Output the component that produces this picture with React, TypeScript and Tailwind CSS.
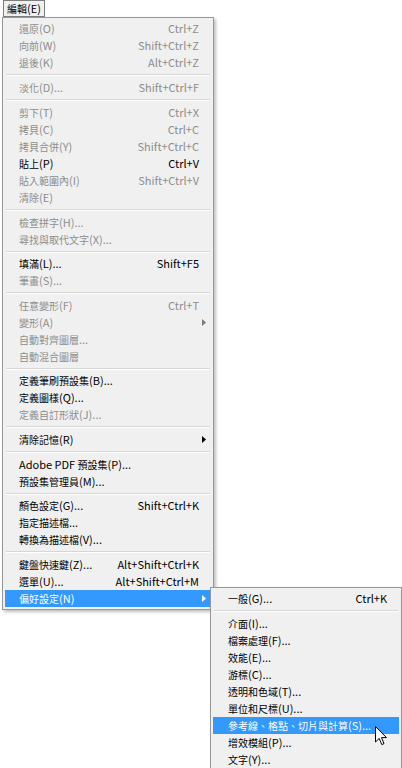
type Entry =
  | { kind: "item"; label: string; shortcut?: string; disabled?: boolean; arrow?: boolean; active?: boolean }
  | { kind: "sep"; h: number };

const font = "font-['Noto_Sans_CJK_TC','Noto_Sans',sans-serif]";

const mainMenu: Entry[] = [
  { kind: "item", label: "還原(O)", shortcut: "Ctrl+Z", disabled: true },
  { kind: "item", label: "向前(W)", shortcut: "Shift+Ctrl+Z", disabled: true },
  { kind: "item", label: "退後(K)", shortcut: "Alt+Ctrl+Z", disabled: true },
  { kind: "sep", h: 8 },
  { kind: "item", label: "淡化(D)...", shortcut: "Shift+Ctrl+F", disabled: true },
  { kind: "sep", h: 8 },
  { kind: "item", label: "剪下(T)", shortcut: "Ctrl+X", disabled: true },
  { kind: "item", label: "拷貝(C)", shortcut: "Ctrl+C", disabled: true },
  { kind: "item", label: "拷貝合併(Y)", shortcut: "Shift+Ctrl+C", disabled: true },
  { kind: "item", label: "貼上(P)", shortcut: "Ctrl+V" },
  { kind: "item", label: "貼入範圍內(I)", shortcut: "Shift+Ctrl+V", disabled: true },
  { kind: "item", label: "清除(E)", disabled: true },
  { kind: "sep", h: 8 },
  { kind: "item", label: "檢查拼字(H)...", disabled: true },
  { kind: "item", label: "尋找與取代文字(X)...", disabled: true },
  { kind: "sep", h: 7 },
  { kind: "item", label: "填滿(L)...", shortcut: "Shift+F5" },
  { kind: "item", label: "筆畫(S)...", disabled: true },
  { kind: "sep", h: 8 },
  { kind: "item", label: "任意變形(F)", shortcut: "Ctrl+T", disabled: true },
  { kind: "item", label: "變形(A)", disabled: true, arrow: true },
  { kind: "item", label: "自動對齊圖層...", disabled: true },
  { kind: "item", label: "自動混合圖層", disabled: true },
  { kind: "sep", h: 7 },
  { kind: "item", label: "定義筆刷預設集(B)..." },
  { kind: "item", label: "定義圖樣(Q)..." },
  { kind: "item", label: "定義自訂形狀(J)...", disabled: true },
  { kind: "sep", h: 8 },
  { kind: "item", label: "清除記憶(R)", arrow: true },
  { kind: "sep", h: 8 },
  { kind: "item", label: "Adobe PDF 預設集(P)..." },
  { kind: "item", label: "預設集管理員(M)..." },
  { kind: "sep", h: 7 },
  { kind: "item", label: "顏色設定(G)...", shortcut: "Shift+Ctrl+K" },
  { kind: "item", label: "指定描述檔..." },
  { kind: "item", label: "轉換為描述檔(V)..." },
  { kind: "sep", h: 8 },
  { kind: "item", label: "鍵盤快速鍵(Z)...", shortcut: "Alt+Shift+Ctrl+K" },
  { kind: "item", label: "選單(U)...", shortcut: "Alt+Shift+Ctrl+M" },
  { kind: "item", label: "偏好設定(N)", arrow: true, active: true },
];

const prefMenu: Entry[] = [
  { kind: "item", label: "一般(G)...", shortcut: "Ctrl+K" },
  { kind: "sep", h: 8 },
  { kind: "item", label: "介面(I)..." },
  { kind: "item", label: "檔案處理(F)..." },
  { kind: "item", label: "效能(E)..." },
  { kind: "item", label: "游標(C)..." },
  { kind: "item", label: "透明和色域(T)..." },
  { kind: "item", label: "單位和尺標(U)..." },
  { kind: "item", label: "參考線、格點、切片與計算(S)...", active: true },
  { kind: "item", label: "增效模組(P)..." },
  { kind: "item", label: "文字(Y)..." },
];

// CJK glyphs in the original are set a little smaller than the latin text
function Label({ text }: { text: string }) {
  const parts = text.split(/([\u3000-\u9fff\uff00-\uffef]+)/).filter(Boolean);
  return (
    <span className="whitespace-nowrap">
      {parts.map((p, i) =>
        /[\u3000-\u9fff\uff00-\uffef]/.test(p) ? (
          <span key={i} className="text-[10px]">
            {p}
          </span>
        ) : (
          <span key={i}>{p}</span>
        )
      )}
    </span>
  );
}

function Arrow({ color }: { color: string }) {
  return (
    <svg width="4" height="7" viewBox="0 0 4 7" className="shrink-0">
      <path d="M0 0 L4 3.5 L0 7 Z" fill={color} />
    </svg>
  );
}

function MenuList({ entries, pl, pr }: { entries: Entry[]; pl: string; pr: string }) {
  return (
    <div className="flex flex-col py-[2px]">
      {entries.map((e, i) => {
        if (e.kind === "sep") {
          return (
            <div key={i} className="flex items-center px-[3px]" style={{ height: e.h }}>
              <div className="h-[2px] w-full border-t border-[#d6d6d6] border-b-white border-b" />
            </div>
          );
        }
        const color = e.active ? "text-white" : e.disabled ? "text-[#8d8d8d]" : "text-black";
        return (
          <div
            key={i}
            className={`relative flex h-[17px] items-center mx-[2px] ${e.active ? "bg-[#3399ff]" : ""} ${color}`}
          >
            <div className={`flex flex-1 items-center justify-between ${pl} ${pr}`}>
              <Label text={e.label} />
              {e.shortcut && <span className="whitespace-nowrap">{e.shortcut}</span>}
            </div>
            {e.arrow && (
              <div className="absolute right-[5px] top-[5px]">
                <Arrow color={e.active ? "#ffffff" : e.disabled ? "#7a7a7a" : "#000000"} />
              </div>
            )}
          </div>
        );
      })}
    </div>
  );
}

function Cursor() {
  return (
    <svg width="13" height="20" viewBox="0 0 13 20" className="absolute left-[375px] top-[726px]">
      <path
        d="M0.5 0.5 L0.5 16 L4.2 12.4 L6.8 18.6 L9 17.6 L6.5 11.6 L11.5 11.6 Z"
        fill="#ffffff"
        stroke="#000000"
        strokeWidth="1"
        strokeLinejoin="miter"
      />
    </svg>
  );
}

export default function App() {
  return (
    <div className={`relative w-[402px] h-[768px] overflow-hidden bg-white text-[11px] leading-none ${font}`}>
      <div className="flex pl-[3px]">
        <div className="flex h-[17px] items-center border border-[#7d7d7d] bg-[#f0f0f0] px-[3px] text-black">
          <Label text="編輯(E)" />
        </div>
      </div>

      <div className="ml-[2px] w-[212px] border border-[#979797] bg-[#f0f0f0] shadow-[2px_2px_3px_rgba(0,0,0,0.25)]">
        <MenuList entries={mainMenu} pl="pl-[14px]" pr="pr-[12px]" />
      </div>

      <div className="absolute left-[210px] top-[587px] w-[192px] border border-[#979797] bg-[#f0f0f0] shadow-[2px_2px_3px_rgba(0,0,0,0.25)]">
        <MenuList entries={prefMenu} pl="pl-[15px]" pr="pr-[12px]" />
      </div>

      <Cursor />
    </div>
  );
}
